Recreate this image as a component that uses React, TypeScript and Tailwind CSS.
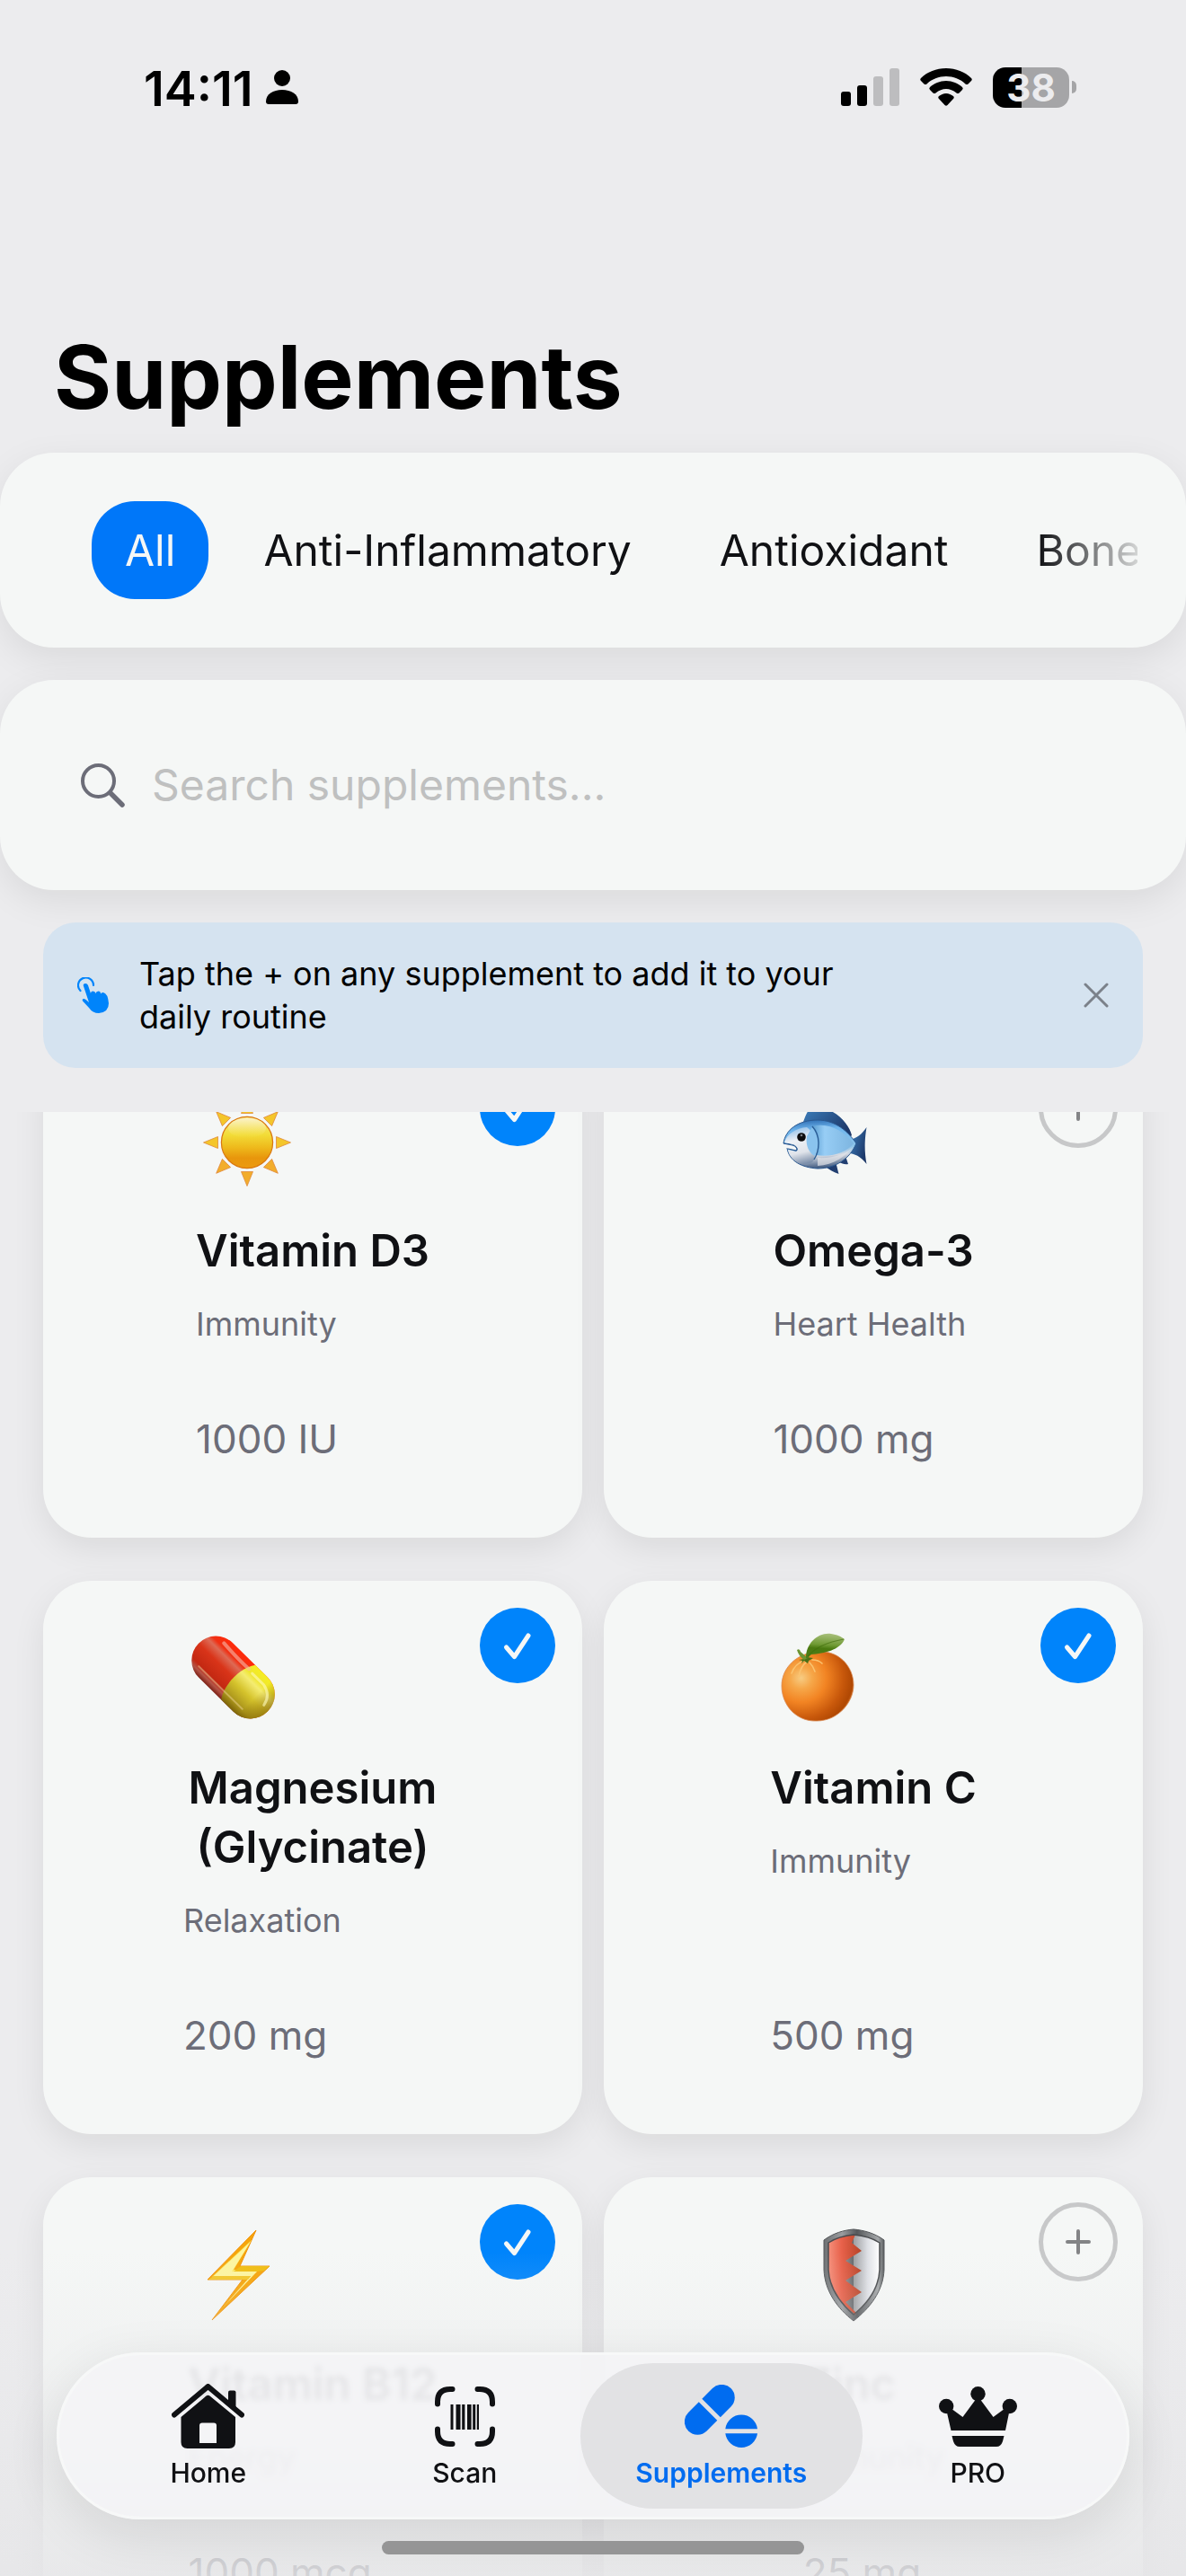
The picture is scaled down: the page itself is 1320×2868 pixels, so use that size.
import React, { useLayoutEffect, useRef, useState } from 'react'

interface Supplement {
  id: string
  name: string
  category: string
  dose: string
  icon: React.ReactNode
}

const categories = ['All', 'Anti-Inflammatory', 'Antioxidant', 'Bone Health']

function SunIcon() {
  const rays = [0, 45, 90, 135, 180, 225, 270, 315]
  return (
    <svg viewBox="0 0 112 112" className="size-28" aria-hidden="true">
      <defs>
        <linearGradient id="sun-body" x1="0" y1="0" x2="0" y2="1">
          <stop offset="0" stopColor="#f9e98f" />
          <stop offset="0.35" stopColor="#f2dc37" />
          <stop offset="0.6" stopColor="#eeb91b" />
          <stop offset="0.8" stopColor="#e8960c" />
          <stop offset="1" stopColor="#ec9a10" />
        </linearGradient>
        <linearGradient id="sun-shine" x1="0" y1="0" x2="0" y2="1">
          <stop offset="0" stopColor="#fbf3cf" stopOpacity="0.9" />
          <stop offset="1" stopColor="#f6e66a" stopOpacity="0" />
        </linearGradient>
      </defs>
      {rays.map((angle) => (
        <path
          key={angle}
          d="M50.5 24.5 L63.5 24.5 L57 8.5 Z"
          fill={angle > 90 && angle < 270 ? '#f2ad2c' : '#f4c62a'}
          stroke="#e08a3c"
          strokeWidth="0.8"
          transform={`rotate(${angle} 57 57)`}
        />
      ))}
      <circle cx="57" cy="57" r="28.6" fill="url(#sun-body)" stroke="#d9770f" strokeWidth="1.2" />
      <ellipse cx="57" cy="41" rx="21" ry="11" fill="url(#sun-shine)" />
    </svg>
  )
}

function FishIcon() {
  return (
    <svg viewBox="0 0 112 112" className="size-28" aria-hidden="true">
      <defs>
        <linearGradient id="fish-body" x1="0.3" y1="0" x2="0.4" y2="1">
          <stop offset="0" stopColor="#2f6fb5" />
          <stop offset="0.2" stopColor="#6fb5ec" />
          <stop offset="0.6" stopColor="#8cc4ea" />
          <stop offset="0.75" stopColor="#d3d9e2" />
          <stop offset="1" stopColor="#3f597f" />
        </linearGradient>
        <linearGradient id="fish-fin" x1="0" y1="0" x2="1" y2="0.6">
          <stop offset="0" stopColor="#3c7fbd" />
          <stop offset="1" stopColor="#1c3768" />
        </linearGradient>
        <linearGradient id="fish-side" x1="0" y1="0" x2="1" y2="0">
          <stop offset="0" stopColor="#5a9dd1" />
          <stop offset="0.3" stopColor="#97cdf5" />
          <stop offset="1" stopColor="#7db5e0" />
        </linearGradient>
        <linearGradient id="fish-face" x1="0.3" y1="0" x2="0.5" y2="1">
          <stop offset="0" stopColor="#8cbde8" />
          <stop offset="0.35" stopColor="#eef1f6" />
          <stop offset="0.7" stopColor="#dfe3ea" />
          <stop offset="1" stopColor="#7d90ab" />
        </linearGradient>
      </defs>
      <path d="M34 34 C37 26 39 21 43 18 C66 15 85 35 88 49 L84 53 C70 38 54 32 34 34 Z" fill="url(#fish-fin)" />
      <path d="M86 54 C94 52 99 48 104.500 40 C102 55 102 67 104.500 81 C99 74 95 71 86 69 Z" fill="url(#fish-fin)" />
      <path d="M57 83 C63 87 67 90 73.500 92 C72 87 72 84 70 80 Z M74 79 C77 80 80 82 84 81 L81 72 Z" fill="#213e70" />
      <path
        d="M12 58 C14 43 28 32 50 32 C70 32 84 45 93 58 C86 75 70 86 50 86 C33 85 18 78 16 63 L26 66 C29 64 26 60 22 59 Z"
        fill="url(#fish-body)"
        stroke="#2a5890"
        strokeWidth="1"
      />
      <path
        d="M13 57 C16 47 26 41 38 40 C47 47 50 60 46 76 C44 80 39 83 33 81 C24 78 18 72 17 65 L26 67 C30 65 26 60 22 59 Z"
        fill="url(#fish-face)"
      />
      <path d="M44 39 C62 34 79 44 90 58 C82 68 66 74 48 71 C54 60 52 46 44 39 Z" fill="url(#fish-side)" />
      <path d="M38 50 C36 62 42 70 47 72 C53 58 50 46 44 40 Z" fill="#8ac3ee" />
      <path d="M44 39 C54 50 52 66 46 76" fill="none" stroke="#2a5d96" strokeWidth="1.4" />
      <path d="M50 83 C68 82 82 72 91 60 C84 70 66 75 50 74 Z" fill="#e2e4e8" opacity="0.7" />
      <path d="M12 58 L22 60 C27 61 28 65 26 66 L17 64" fill="#f4f6f7" stroke="#22538f" strokeWidth="1.2" />
      <circle cx="32" cy="51" r="4.8" fill="#0c0c0e" />
      <circle cx="32" cy="49" r="1.3" fill="#7b7f86" />
    </svg>
  )
}

function PillIcon() {
  return (
    <svg viewBox="0 0 112 112" className="size-28" aria-hidden="true">
      <defs>
        <linearGradient id="pill-red" x1="0" y1="0" x2="0" y2="1">
          <stop offset="0" stopColor="#ff2a0a" />
          <stop offset="0.2" stopColor="#f03013" />
          <stop offset="0.3" stopColor="#dd6a55" />
          <stop offset="0.5" stopColor="#d93419" />
          <stop offset="0.8" stopColor="#c32812" />
          <stop offset="0.9" stopColor="#b35547" />
          <stop offset="1" stopColor="#7c2015" />
        </linearGradient>
        <linearGradient id="pill-yellow" x1="0" y1="0" x2="0" y2="1">
          <stop offset="0" stopColor="#f5ee22" />
          <stop offset="0.18" stopColor="#efe62e" />
          <stop offset="0.3" stopColor="#f4ec72" />
          <stop offset="0.55" stopColor="#d5c32c" />
          <stop offset="0.85" stopColor="#a8921a" />
          <stop offset="1" stopColor="#7d6408" />
        </linearGradient>
        <linearGradient id="pill-shade" x1="0" y1="0" x2="1" y2="0">
          <stop offset="0.6" stopColor="#7d5c00" stopOpacity="0" />
          <stop offset="1" stopColor="#7d5c00" stopOpacity="0.6" />
        </linearGradient>
      </defs>
      <g transform="translate(55.500 54.500) rotate(44.500)">
        <rect x="-54" y="-27" width="108" height="54" rx="27" fill="url(#pill-red)" />
        <path d="M8 -27 H27 A27 27 0 0 1 27 27 H8 C-2 14 -2 -14 8 -27 Z" fill="url(#pill-yellow)" />
        <path d="M8 -27 H27 A27 27 0 0 1 27 27 H8 C-2 14 -2 -14 8 -27 Z" fill="url(#pill-shade)" />
        <path d="M-34 -20 Q-8 -18 6 -19" fill="none" stroke="#f6b9aa" strokeWidth="4" strokeLinecap="round" opacity="0.6" />
        <path d="M12 -18 H30 Q44 -15 46 -2" fill="none" stroke="#fffbc0" strokeWidth="3" strokeLinecap="round" opacity="0.6" />
        <path d="M-36 18 H32" fill="none" stroke="#f3d9a0" strokeWidth="2" strokeLinecap="round" opacity="0.45" />
      </g>
    </svg>
  )
}

function OrangeIcon() {
  return (
    <svg viewBox="0 0 112 112" className="size-28" aria-hidden="true">
      <defs>
        <radialGradient id="orange-body" cx="0.27" cy="0.38" r="0.78">
          <stop offset="0" stopColor="#f7cc83" />
          <stop offset="0.2" stopColor="#f6a749" />
          <stop offset="0.45" stopColor="#f28423" />
          <stop offset="0.75" stopColor="#c8580b" />
          <stop offset="0.92" stopColor="#b04803" />
          <stop offset="1" stopColor="#d87322" />
        </radialGradient>
        <linearGradient id="orange-leaf" x1="0.6" y1="0" x2="0.5" y2="1">
          <stop offset="0" stopColor="#a9c07c" />
          <stop offset="0.45" stopColor="#6f9a33" />
          <stop offset="0.6" stopColor="#4a7a10" />
          <stop offset="1" stopColor="#4f7d1a" />
        </linearGradient>
      </defs>
      <path
        d="M53 26 C76 24 93 42 93 63 C93 82 76 103 52 103 C29 104 13 85 13 64 C13 43 31 27 53 26 Z"
        fill="url(#orange-body)"
        stroke="#d98a54"
        strokeWidth="0.8"
      />
      <path
        d="M38 36 Q28 39 24 50 M41 37 Q34 42 32 54 M44 38 Q48 42 50 48 M47 35 Q54 35 58 39"
        fill="none"
        stroke="#fbc36f"
        strokeWidth="1.6"
        strokeLinecap="round"
      />
      <path d="M32 35 L38 34 L41 32 L48 33 L43 36 L42 39 L38 36 L35 39 L36 36 Z" fill="#4b6f16" />
      <path d="M30 24 Q33 22 34 26 L42 33 L38 35 Q32 31 30 24 Z" fill="#6d9434" />
      <path d="M40 33 C40 16 54 4 68 6 C75 7 79 9 83 12 C78 24 60 28 46 29 Q43 31 42 34 Z" fill="url(#orange-leaf)" />
      <path d="M42 31 Q54 17 82 12" fill="none" stroke="#3f6b0b" strokeWidth="1.200" opacity="0.6" />
    </svg>
  )
}

function BoltIcon() {
  return (
    <svg viewBox="0 0 112 112" className="size-28" aria-hidden="true">
      <path d="M75 6 L57 46 H90 L26 106 L60 61 H21 Z" fill="#f6a50b" stroke="#f0920a" strokeWidth="1" />
      <path d="M70 17 L50 50 H79 L74 53 L42 53 L26 58 Z" fill="#fbe96b" />
      <path d="M68 20 L28 57 H69 L38 92 L76 52 H48 Z" fill="#fdf59f" />
      <path d="M58 46 H90 L84 51 L76 52 H50 Z" fill="#f0bd12" />
      <path d="M28 57 H69 L66 61 H22 Z" fill="#f3c72a" />
    </svg>
  )
}

function ShieldIcon() {
  return (
    <svg viewBox="0 0 112 112" className="size-28" aria-hidden="true">
      <defs>
        <linearGradient id="shield-rim" x1="0" y1="0" x2="1" y2="0">
          <stop offset="0" stopColor="#6e7173" />
          <stop offset="0.3" stopColor="#9a9da0" />
          <stop offset="0.55" stopColor="#55585b" />
          <stop offset="0.9" stopColor="#a5a8aa" />
          <stop offset="1" stopColor="#5c5f61" />
        </linearGradient>
        <linearGradient id="shield-silver" x1="0" y1="0" x2="1" y2="0">
          <stop offset="0" stopColor="#9d9fa2" />
          <stop offset="0.55" stopColor="#dfe1e6" />
          <stop offset="1" stopColor="#ffffff" />
        </linearGradient>
        <linearGradient id="shield-red" x1="0" y1="0" x2="1" y2="0">
          <stop offset="0" stopColor="#f58f7b" />
          <stop offset="0.4" stopColor="#e8614a" />
          <stop offset="1" stopColor="#b64327" />
        </linearGradient>
      </defs>
      <path
        d="M56 5 C67 6 79 9 90 17 V50 C89 74 74 93 56 107 C38 93 24 74 23 50 V17 C34 9 45 6 56 5 Z"
        fill="url(#shield-rim)"
        stroke="#525558"
        strokeWidth="1"
      />
      <path d="M56 11 C66 12 76 14 85 20 V50 C84 71 72 87 56 100 Z" fill="url(#shield-silver)" />
      <path
        d="M58 11 C46 12 36 14 28 20 V50 C29 70 41 87 58 100 L59 98 L47 86 L65 75 L47 62 L65 51 L47 40 L65 29 L54 20 Z"
        fill="url(#shield-red)"
      />
      <path d="M28 20 C37 14 46 12 56 11 C66 12 76 14 85 20 V50 C84 71 72 87 56 100 C41 87 29 70 28 50 Z" fill="none" stroke="#494b4e" strokeWidth="1.5" />
    </svg>
  )
}

const supplements: Supplement[] = [
  { id: 'd3', name: 'Vitamin D3', category: 'Immunity', dose: '1000 IU', icon: <SunIcon /> },
  { id: 'omega', name: 'Omega-3', category: 'Heart Health', dose: '1000 mg', icon: <FishIcon /> },
  { id: 'magnesium', name: 'Magnesium (Glycinate)', category: 'Relaxation', dose: '200 mg', icon: <PillIcon /> },
  { id: 'c', name: 'Vitamin C', category: 'Immunity', dose: '500 mg', icon: <OrangeIcon /> },
  { id: 'b12', name: 'Vitamin B12', category: 'Energy', dose: '1000 mcg', icon: <BoltIcon /> },
  { id: 'zinc', name: 'Zinc', category: 'Immunity', dose: '25 mg', icon: <ShieldIcon /> }
]

function StatusBar() {
  return (
    <div className="flex h-[54px] items-center justify-between pl-[160px] pr-[122px]">
      <div className="flex items-center gap-[14px]">
        <span className="pt-1 text-[54px] leading-[54px] font-semibold">14:11</span>
        <svg viewBox="0 0 36 38" className="h-[38px] w-9" aria-hidden="true">
          <circle cx="18" cy="9" r="9" />
          <path d="M0 35 C0 27 8 22 18 22 S36 27 36 35 Q36 38 33 38 H3 Q0 38 0 35 Z" />
        </svg>
      </div>
      <div className="flex items-center gap-[23px]">
        <svg viewBox="0 0 65 42" className="h-[42px] w-[65px]" aria-hidden="true">
          <rect x="0" y="26" width="11" height="16" rx="3" />
          <rect x="18" y="19" width="11" height="23" rx="3" />
          <rect x="36" y="9" width="11" height="33" rx="3" fill="#bdbdbf" />
          <rect x="54" y="0" width="11" height="42" rx="3" fill="#bdbdbf" />
        </svg>
        <svg viewBox="0 0 58 42" className="h-[42px] w-[58px]" aria-hidden="true">
          <path d="M29 0 C40 0 50 4 57 11 Q58.500 12.500 57 14 L53.500 17.500 Q52 18.500 50.500 17.500 C45 12 37 9 29 9 S13 12 7.500 17.500 Q6 18.500 4.500 17.500 L1 14 Q-0.500 12.500 1 11 C8 4 18 0 29 0 Z" />
          <path d="M29 14 C36 14 42.500 17 47 21 Q48.500 22.500 47 24 L43.500 27.500 Q42 28.500 40.500 27.500 C37 24.500 33 23 29 23 S21 24.500 17.500 27.500 Q16 28.500 14.500 27.500 L11 24 Q9.500 22.500 11 21 C15.500 17 22 14 29 14 Z" />
          <path d="M29 28 C32 28 35 29.500 37 31 Q38.500 32.500 37 34 L30.500 41 Q29 42.500 27.500 41 L21 34 Q19.500 32.500 21 31 C23 29.500 26 28 29 28 Z" />
        </svg>
        <div className="flex items-center gap-[3px]">
          <div className="flex h-[45px] w-[85px] items-center justify-center rounded-[14px] bg-linear-to-r from-black from-38% to-[#a5a5a7] to-38% text-[42px] leading-[45px] font-bold text-[#ececee]">
            38
          </div>
          <div className="h-[14px] w-[5px] rounded-r-full bg-[#a5a5a7]" />
        </div>
      </div>
    </div>
  )
}

interface ToggleButtonProps {
  name: string
  added: boolean
  onToggle: () => void
}

function ToggleButton({ name, added, onToggle }: ToggleButtonProps) {
  if (added) {
    return (
      <button
        type="button"
        onClick={onToggle}
        aria-label={`Remove ${name}`}
        className="absolute top-[30px] right-[30px] flex size-[84px] items-center justify-center rounded-full bg-[#0084fb]"
      >
        <svg viewBox="0 0 84 84" className="size-[84px]" aria-hidden="true">
          <path d="M29.500 44 L38.500 54.500 L54 31" fill="none" stroke="#f5f7f6" strokeWidth="5" strokeLinecap="round" strokeLinejoin="round" />
        </svg>
      </button>
    )
  }

  return (
    <button
      type="button"
      onClick={onToggle}
      aria-label={`Add ${name}`}
      className="absolute top-7 right-7 flex size-[88px] items-center justify-center rounded-full border-[5px] border-[#c7c8c9]"
    >
      <svg viewBox="0 0 28 28" className="size-7" aria-hidden="true">
        <path d="M14 2 V26 M2 14 H26" fill="none" stroke="#838486" strokeWidth="4" strokeLinecap="round" />
      </svg>
    </button>
  )
}

interface SupplementCardProps {
  item: Supplement
  added: boolean
  onToggle: () => void
}

function SupplementCard({ item, added, onToggle }: SupplementCardProps) {
  return (
    <article className="relative flex justify-center rounded-[54px] bg-[#f5f7f6] pt-[53px] pb-20 shadow-[0_12px_36px_rgba(0,0,0,0.08)]">
      <div className="flex max-w-[288px] flex-col items-start">
        {item.icon}
        <h2 className="mt-[33px] text-center text-[49px] leading-[66px] font-semibold text-[#101114]">{item.name}</h2>
        <p className="mt-6 text-[36px] leading-[48px] text-[#6c6d78]">{item.category}</p>
        <p className="mt-auto pt-[74px] text-[44px] leading-[60px] text-[#6c6d78]">{item.dose}</p>
      </div>
      <ToggleButton name={item.name} added={added} onToggle={onToggle} />
    </article>
  )
}

function HomeIcon() {
  return (
    <svg viewBox="0 0 81 72" className="h-[72px] w-[81px]" aria-hidden="true">
      <path d="M3 34.500 L40.500 3 L78 34.500" fill="none" stroke="currentColor" strokeWidth="6" strokeLinecap="round" strokeLinejoin="round" />
      <path d="M63 9.500 Q63 7.500 65 7.500 H69.500 Q71.500 7.500 71.500 9.500 V28 L63 21 Z" fill="currentColor" />
      <path
        fillRule="evenodd"
        d="M38.500 13.500 Q40.500 12 42.500 13.500 L71 37 V65 Q71 72 64 72 H17.500 Q10.500 72 10.500 65 V37 Z M34 43.500 Q31 43.500 31 46.500 V66 H50 V46.500 Q50 43.500 47 43.500 Z"
        fill="currentColor"
      />
    </svg>
  )
}

function ScanIcon() {
  return (
    <svg viewBox="0 0 67 67" className="size-[67px]" aria-hidden="true">
      <path
        d="M3 19.500 V17 Q3 3 17 3 H19.500 M47.500 3 H50 Q64 3 64 17 V19.500 M64 47.500 V50 Q64 64 50 64 H47.500 M19.500 64 H17 Q3 64 3 50 V47.500"
        fill="none"
        stroke="currentColor"
        strokeWidth="6"
        strokeLinecap="round"
      />
      <path
        d="M17.500 20 h3 v28 h-3 Z M23.500 20 h5 v28 h-5 Z M30.200 20 h3.200 v28 h-3.200 Z M36 20 h4.600 v28 h-4.600 Z M42.200 20 h3 v28 h-3 Z M46.800 20 h2.200 v28 h-2.200 Z"
        fill="currentColor"
      />
    </svg>
  )
}

function PillsIcon() {
  return (
    <svg viewBox="0 0 81 70" className="h-[70px] w-[81px]" aria-hidden="true">
      <g transform="translate(27.800 27.800) rotate(-45)" fill="currentColor">
        <path d="M-2.500 -14.500 H-19 A14.500 14.500 0 0 0 -19 14.500 H-2.500 Z" />
        <path d="M2.500 -14.500 H19 A14.500 14.500 0 0 1 19 14.500 H2.500 Z" />
      </g>
      <path d="M45.300 49.200 A18 18 0 0 1 81 49.200 Z M45.300 54.200 A18 18 0 0 0 81 54.200 Z" fill="currentColor" />
    </svg>
  )
}

function CrownIcon() {
  return (
    <svg viewBox="0 0 87 67" className="h-[67px] w-[87px]" aria-hidden="true">
      <g fill="currentColor">
        <circle cx="8.200" cy="22" r="8.200" />
        <circle cx="43.500" cy="8.200" r="8.200" />
        <circle cx="78.800" cy="22" r="8.200" />
        <path d="M8.500 27 L15.600 26 L26.500 34 L40.500 15 H46.500 L60.500 34 L71.400 26 L78.500 27 L74 49 H13.500 Z" />
        <path d="M14.500 55 H72.500 L71 61 Q69 67 64 67 H23 Q18 67 16 61 Z" />
      </g>
    </svg>
  )
}

const tabs = [
  { label: 'Home', icon: <HomeIcon /> },
  { label: 'Scan', icon: <ScanIcon /> },
  { label: 'Supplements', icon: <PillsIcon /> },
  { label: 'PRO', icon: <CrownIcon /> }
]

function TabBar() {
  const [active, setActive] = useState('Supplements')

  return (
    <nav className="absolute inset-x-[63px] bottom-[63px] flex rounded-full border-[3px] border-[#f7f8f8] bg-[#f4f4f6]/90 px-[23px] py-[9px] shadow-[0_16px_60px_rgba(0,0,0,0.1)] backdrop-blur-[3px]">
      {tabs.map(({ label, icon }) => (
        <button
          key={label}
          type="button"
          onClick={() => setActive(label)}
          className={`-mx-[14px] flex h-[162px] flex-1 flex-col items-center gap-[6px] rounded-full pt-5 ${
            label === active ? 'bg-[#e2e2e4] font-semibold text-[#006cf0]' : 'font-medium text-[#101114]'
          }`}
        >
          <span className="flex h-[78px] items-center">{icon}</span>
          <span className="text-[30px] leading-9">{label}</span>
        </button>
      ))}
    </nav>
  )
}

export default function App() {
  const [category, setCategory] = useState('All')
  const [query, setQuery] = useState('')
  const [showTip, setShowTip] = useState(true)
  const [added, setAdded] = useState(['d3', 'magnesium', 'c', 'b12'])
  const listRef = useRef<HTMLDivElement>(null)

  // The list opens slightly scrolled under the header
  useLayoutEffect(() => {
    if (listRef.current) listRef.current.scrollTop = 76
  }, [])

  const toggle = (id: string) => {
    setAdded((prev) => (prev.includes(id) ? prev.filter((x) => x !== id) : [...prev, id]))
  }

  const visible = supplements.filter((s) => s.name.toLowerCase().includes(query.toLowerCase()))

  return (
    <div className="relative flex h-screen flex-col overflow-hidden bg-[#ececee] pt-[70px] font-[Inter,sans-serif] text-black">
      <StatusBar />

      <h1 className="mt-[236px] px-[60px] text-[98px] leading-[120px] font-bold">Supplements</h1>

      <div className="mt-6 rounded-[60px] bg-[#f5f7f6] p-[54px] shadow-[0_12px_40px_rgba(0,0,0,0.08)]">
        <div className="flex gap-6 overflow-hidden pl-12 [mask-image:linear-gradient(to_right,black_calc(100%-110px),rgba(0,0,0,0.15))]">
          {categories.map((name) => (
            <button
              key={name}
              type="button"
              onClick={() => setCategory(name)}
              className={`h-[109px] shrink-0 rounded-[48px] px-[37px] text-[48px] whitespace-nowrap ${
                name === category ? 'bg-[#0077f9] text-[#f5f7f6]' : 'text-[#101114]'
              }`}
            >
              {name}
            </button>
          ))}
        </div>
      </div>

      <label className="mt-9 flex h-[234px] shrink-0 items-center gap-[30px] rounded-[60px] bg-[#f5f7f6] px-[90px] shadow-[0_12px_40px_rgba(0,0,0,0.08)]">
        <svg viewBox="0 0 49 49" className="size-[49px]" aria-hidden="true">
          <circle cx="19.500" cy="19.500" r="17.500" fill="none" stroke="#6c6d78" strokeWidth="4" />
          <path d="M33 33 L46 46" stroke="#6c6d78" strokeWidth="5.500" strokeLinecap="round" />
        </svg>
        <input
          type="text"
          value={query}
          onChange={(e) => setQuery(e.target.value)}
          placeholder="Search supplements..."
          aria-label="Search supplements"
          className="min-w-0 flex-1 bg-transparent text-[48px] leading-[66px] outline-none placeholder:text-[#bfc0c0]"
        />
      </label>

      {showTip && (
        <div className="mx-12 mt-9 flex items-center gap-[33px] rounded-[36px] bg-[#d5e3f0] px-[38px] py-[33px]">
          <svg viewBox="0 0 36 40" className="h-10 w-9" aria-hidden="true">
            <path d="M3.500 15 A8.500 8.500 0 1 1 18 9" fill="none" stroke="#0084fb" strokeWidth="2.200" strokeLinecap="round" />
            <path
              d="M7 10 Q6 7.500 8.500 7 T12 9 L15 18 Q15 15.500 17.500 15.500 T20.500 18 Q21 15.500 23.500 15.500 T26 18.500 Q27 16.500 29 17 Q34 18 35 29 Q35 39 24 40 Q17 40 13 34 L6 26.500 Q5 24.500 7 24 Q8.500 23.500 13 28 Z"
              fill="#0084fb"
            />
          </svg>
          <p className="max-w-[820px] text-[36px] leading-[48px]">
            Tap the + on any supplement to add it to your daily routine
          </p>
          <button type="button" onClick={() => setShowTip(false)} aria-label="Dismiss tip" className="ml-auto">
            <svg viewBox="0 0 28 28" className="size-7" aria-hidden="true">
              <path d="M2 2 L26 26 M26 2 L2 26" stroke="#7b818a" strokeWidth="3" strokeLinecap="round" />
            </svg>
          </button>
        </div>
      )}

      <main ref={listRef} className="mt-[49px] min-h-0 flex-1 overflow-y-auto [scrollbar-width:none]">
        <div className="grid grid-cols-2 gap-x-6 gap-y-12 px-12 pb-60">
          {visible.map((item) => (
            <SupplementCard key={item.id} item={item} added={added.includes(item.id)} onToggle={() => toggle(item.id)} />
          ))}
        </div>
      </main>

      <div className="pointer-events-none absolute inset-x-0 bottom-0 h-[360px] bg-linear-to-b from-[#e6e6e8]/0 to-[#e6e6e8]/85" />
      <TabBar />
      <div className="absolute bottom-6 left-1/2 h-[15px] w-[470px] -translate-x-1/2 rounded-full bg-[#959596]" />
    </div>
  )
}
